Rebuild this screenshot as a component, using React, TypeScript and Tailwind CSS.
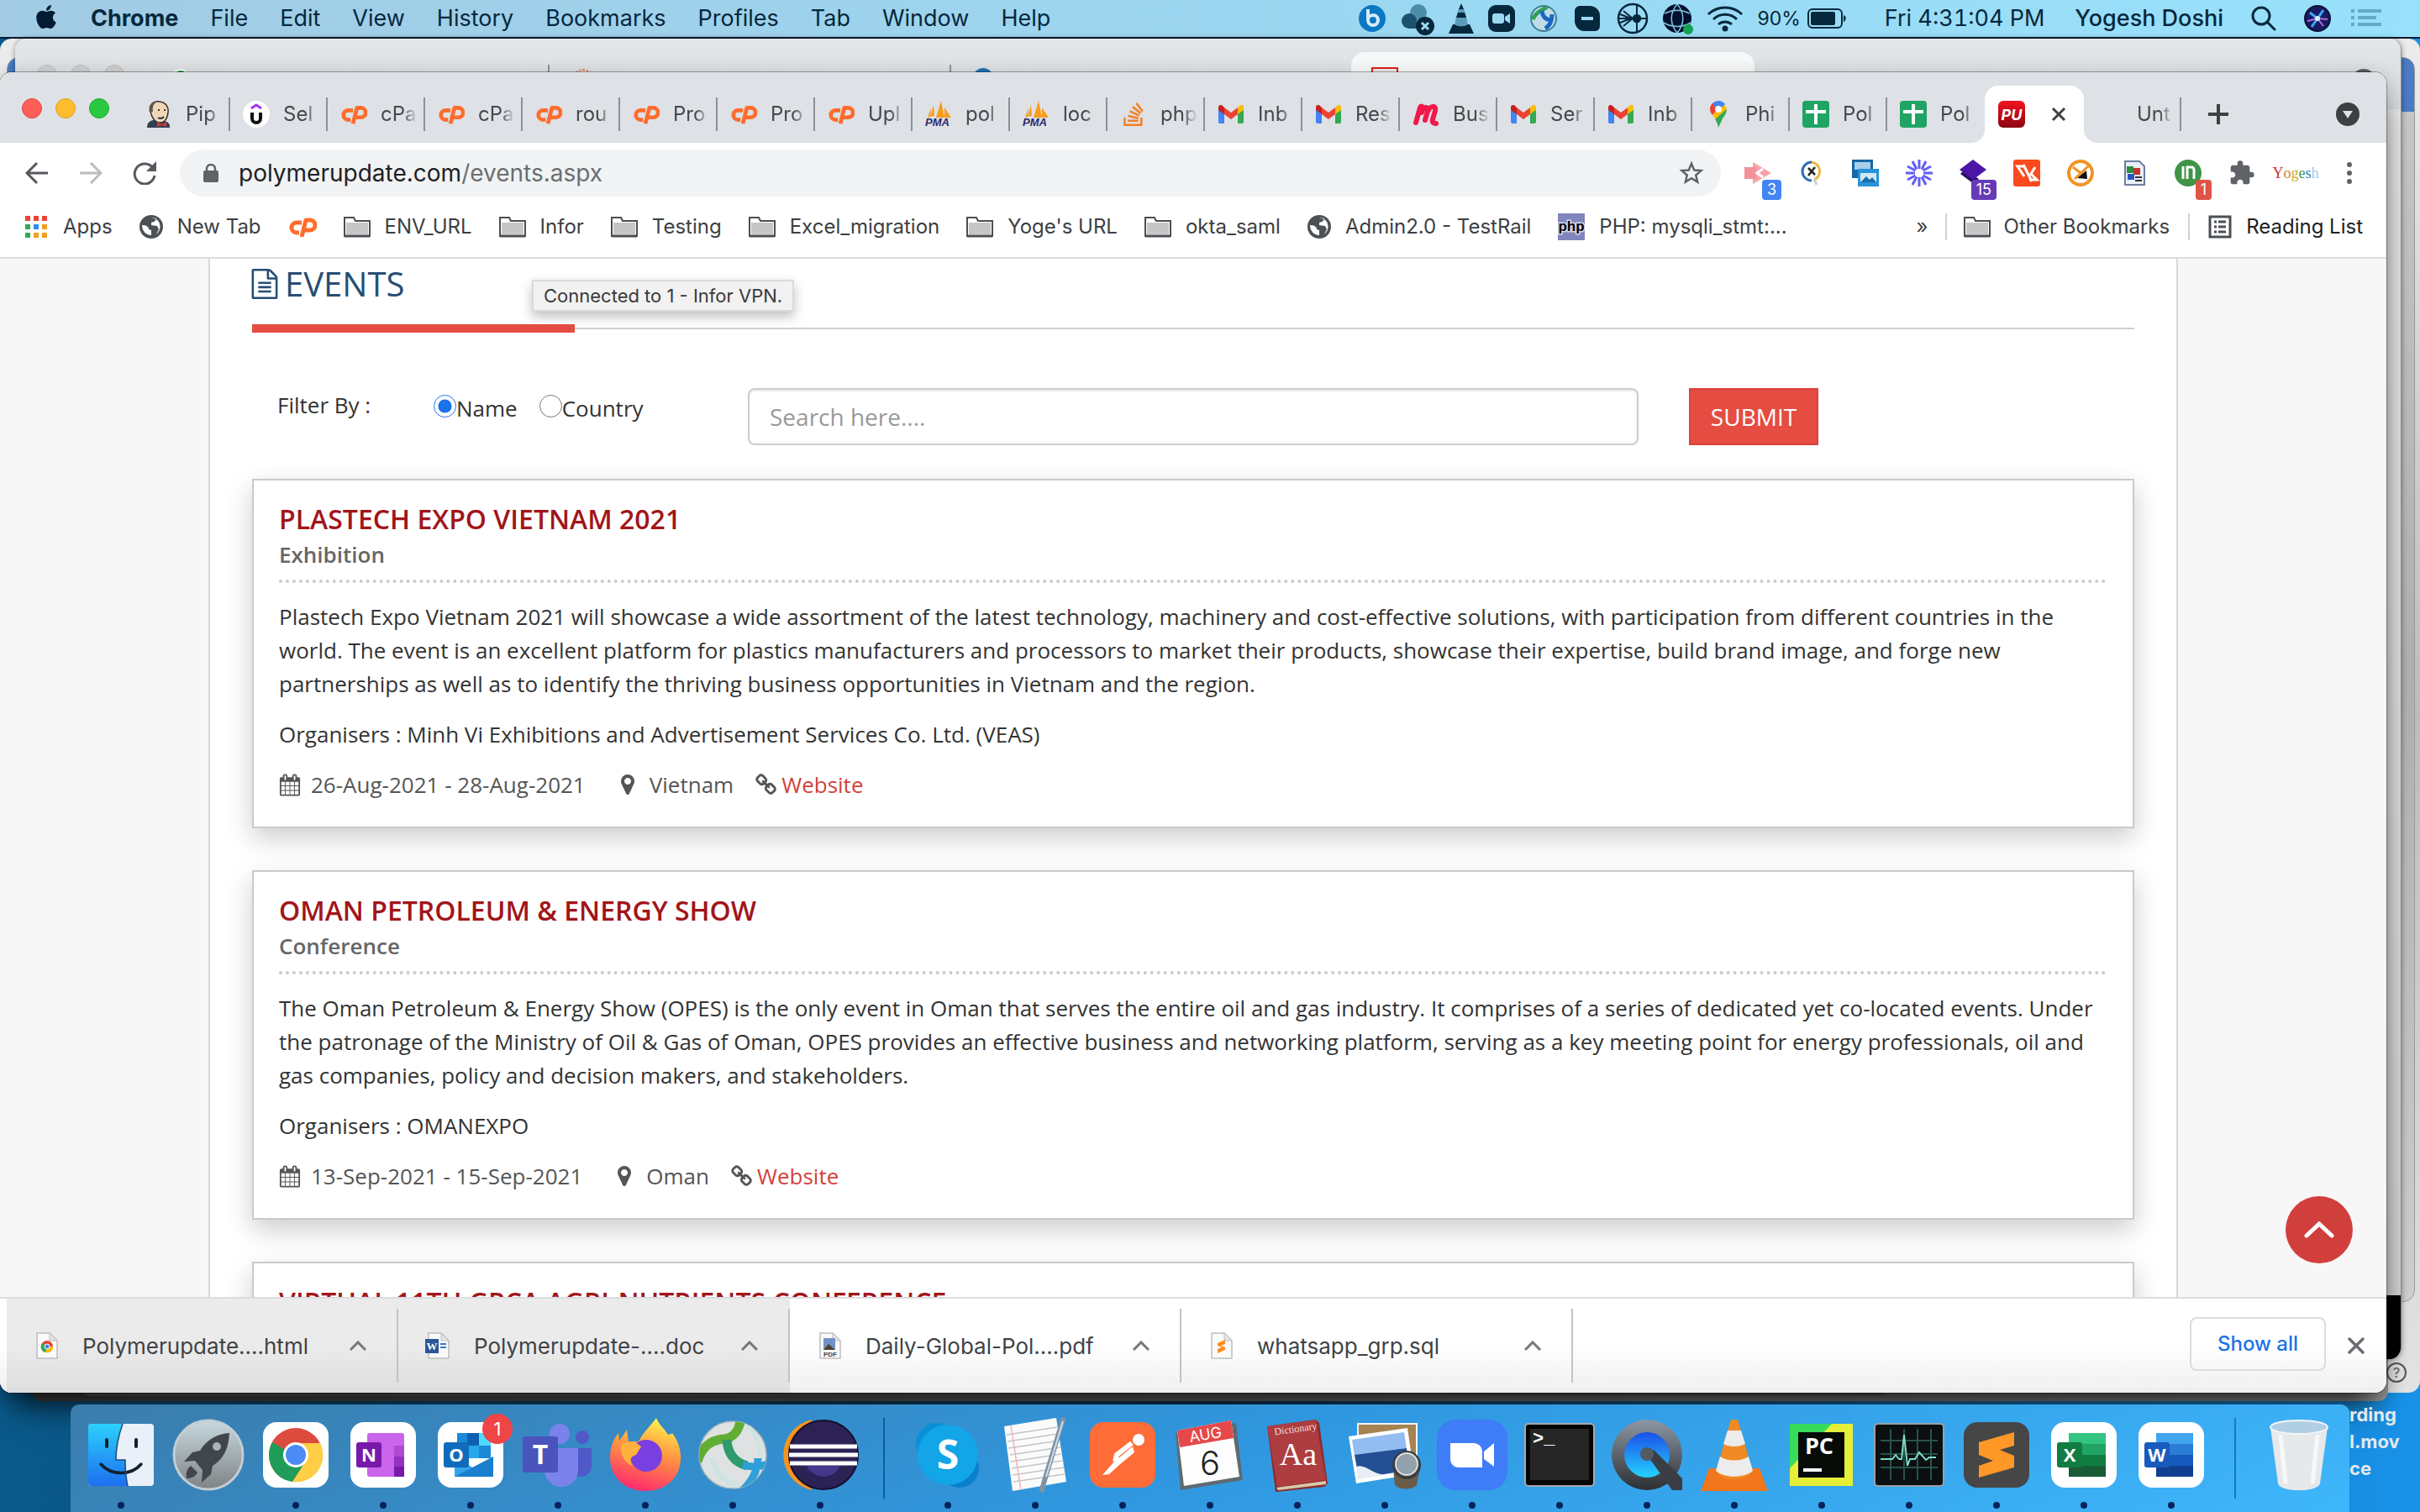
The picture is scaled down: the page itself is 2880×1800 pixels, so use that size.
import type { ReactNode } from "react";
import { FaApple } from "react-icons/fa";
import { MdExtension } from "react-icons/md";
import { SiStackoverflow } from "react-icons/si";

const ui = "font-['Inter',sans-serif]";

/* ---------- menu bar ---------- */

const menus = ["File", "Edit", "View", "History", "Bookmarks", "Profiles", "Tab", "Window", "Help"];

function StatusIcons() {
  return (
    <div className="flex items-center gap-4 text-[#06283d]">
      <svg className="h-9 w-9" viewBox="0 0 36 36">
        <circle cx="18" cy="18" r="16" fill="#0a78c2" />
        <path d="M13 7v13a6 6 0 1 0 6-6c-2 0-4 1-6 3" fill="none" stroke="#d4ecfa" strokeWidth="4" />
      </svg>
      <svg className="h-10 w-10" viewBox="0 0 40 40">
        <circle cx="21" cy="13" r="10" fill="#4c8daa" />
        <circle cx="10" cy="23" r="9" fill="#1d526c" />
        <path d="M10 32h16V18z" fill="#1d526c" />
        <circle cx="29" cy="29" r="11" fill="#06283d" />
        <path d="M25 25l8 8M33 25l-8 8" stroke="#9cd9f2" strokeWidth="3" />
      </svg>
      <svg className="h-9 w-8" viewBox="0 0 32 36">
        <path d="M13 6h6l4 14H9z" fill="#5c9cb9" />
        <path d="M16 0l-3 7h6zM12 11h8l2 6H10z" fill="#06283d" />
        <path d="M6 25h3c4 3 10 3 14 0h3l5 11H1z" fill="#06283d" />
        <path d="M10 18h12l2 7c-4 3-12 3-16 0z" fill="#5c9cb9" />
      </svg>
      <svg className="h-8 w-8" viewBox="0 0 32 32">
        <rect width="32" height="32" rx="9" fill="#06283d" />
        <rect x="5" y="10" width="14" height="12" rx="3" fill="#9cd9f2" />
        <path d="M20 14l6-4v12l-6-4z" fill="#9cd9f2" />
      </svg>
      <svg className="h-9 w-9" viewBox="0 0 36 36">
        <circle cx="18" cy="18" r="15" fill="#bfdce6" stroke="#3d7f92" strokeWidth="2" />
        <path d="M5 19C9 9 18 8 22 4" fill="none" stroke="#2fa05a" strokeWidth="5" />
        <path d="M16 9c1 8 6 11 12 11M28 13c0 9-3 14-8 17" fill="none" stroke="#1769c4" strokeWidth="5" />
      </svg>
      <svg className="h-9 w-9" viewBox="0 0 36 36">
        <path d="M9 3h12a12 12 0 0 1 12 13v11a6 6 0 0 1-7 6H14A12 12 0 0 1 3 21V9a6 6 0 0 1 6-6z" fill="#06283d" />
        <path d="M11 18h14" stroke="#9cd9f2" strokeWidth="4" />
      </svg>
      <svg className="h-10 w-10" viewBox="0 0 40 40" fill="none" stroke="#06283d" strokeWidth="2.5">
        <circle cx="20" cy="20" r="17" />
        <circle cx="25" cy="20" r="4" fill="#06283d" />
        <path d="M25 3v12M25 25v12M29 20h8M20 20H4M20 20L9 11M20 20L9 29M18 20L5 15M18 20L5 25" strokeWidth="2" />
      </svg>
      <svg className="h-10 w-9" viewBox="0 0 36 40" fill="none" stroke="#7fc3de" strokeWidth="1.5">
        <circle cx="17" cy="20" r="17" fill="#020f2c" stroke="none" />
        <path d="M17 3c-9 10-9 24 0 34M17 3c9 10 9 24 0 34M2 14c10-5 20-5 30 0M1 25c10 6 22 6 32 0" />
        <circle cx="30" cy="33" r="6" fill="#12a150" stroke="none" />
      </svg>
      <svg className="h-8 w-11" viewBox="0 0 44 32" fill="none" stroke="#06283d" strokeWidth="3">
        <path d="M2 11a29 29 0 0 1 40 0M8 17a20 20 0 0 1 28 0M14 23a12 12 0 0 1 16 0" />
        <circle cx="22" cy="28" r="2" fill="#06283d" />
      </svg>
      <div className="flex items-center gap-2">
        <span className="text-[23px]">90%</span>
        <svg className="h-6 w-12" viewBox="0 0 48 24">
          <rect x="1" y="1" width="40" height="22" rx="5" fill="none" stroke="#06283d" strokeWidth="2" />
          <rect x="4" y="4" width="29" height="16" rx="2" fill="#06283d" />
          <path d="M43 8v8c3-1 4-7 0-8z" fill="#06283d" />
        </svg>
      </div>
    </div>
  );
}

function MenuBar() {
  return (
    <header className={`relative flex h-[46px] items-center justify-between border-b-2 border-[#02182b] bg-linear-to-r from-[#a2cbe4] via-[#9cd6f0] to-[#98e1fb] pl-10 pr-[46px] text-[27px] text-[#06283d] ${ui}`}>
      <nav className="flex items-center gap-[38px]">
        <FaApple className="mb-1 h-8 w-[30px] text-[#031b33]" />
        <span className="font-bold">Chrome</span>
        {menus.map((m) => (
          <span key={m}>{m}</span>
        ))}
      </nav>
      <div className="flex items-center">
        <StatusIcons />
        <span className="ml-11 tabular-nums">Fri 4:31:04 PM</span>
        <span className="ml-9 font-medium">Yogesh Doshi</span>
        <svg className="ml-8 h-8 w-8" viewBox="0 0 32 32" fill="none" stroke="#06283d" strokeWidth="3">
          <circle cx="13" cy="13" r="10" />
          <path d="M20 20l9 9" strokeLinecap="round" />
        </svg>
        <svg className="ml-8 h-8 w-8" viewBox="0 0 32 32">
          <circle cx="16" cy="16" r="15" fill="#1a1a63" stroke="#0b1030" strokeWidth="2" />
          <path d="M7 9l9 7 7-10M16 16l-7 10" stroke="#3aa8f0" strokeWidth="3" fill="none" />
          <path d="M16 16l7 9M4 19l12-3 12 1" stroke="#b06be0" strokeWidth="2" fill="none" />
          <circle cx="16" cy="16" r="3" fill="#d8f4ff" />
        </svg>
        <svg className="ml-6 h-[22px] w-9" viewBox="0 0 36 22" fill="#66a9c4">
          <path d="M0 0h4v4H0zM8 0h28v4H8zM0 8h4v4H0zM8 8h22v4H8zM0 16h4v4H0zM8 16h28v4H8z" />
        </svg>
      </div>
    </header>
  );
}

/* ---------- favicons ---------- */

const Gmail = () => (
  <svg className="h-[22px] w-[30px]" viewBox="0 0 30 22">
    <path d="M0 3v17a2 2 0 0 0 2 2h5V8z" fill="#4285f4" />
    <path d="M30 3v17a2 2 0 0 1-2 2h-5V8z" fill="#34a853" />
    <path d="M23 3v8l7-5V3c0-3-3-4-5-2z" fill="#fbbc04" />
    <path d="M7 11V3l8 6 8-6v8l-8 6z" fill="#ea4335" />
    <path d="M0 3v3l7 5V3L5 1C3-1 0 0 0 3z" fill="#c5221f" />
  </svg>
);

const Cpanel = () => (
  <svg className="h-6 w-[34px]" viewBox="0 0 34 24" fill="none" stroke="#ff6c2c" strokeWidth="5" strokeLinejoin="round">
    <path d="M16 7h-6a6 6 0 0 0 0 12h3" />
    <path d="M16 24l5-20h5a6 6 0 0 1 0 12h-6" />
  </svg>
);

const Pma = () => (
  <svg className="h-8 w-8 overflow-visible" viewBox="0 0 32 32">
    <path d="M10 5L6 19l5-1zM13 20L19 0l4 20zM23 20l0-12 8 12zM3 20l4-12-1 11z" fill="#f89c1c" />
    <text x="0" y="30" fontSize="13" fontWeight="bold" fontStyle="italic" fontFamily="Liberation Sans" fill="#2d2a6b">PMA</text>
  </svg>
);

const Sheet = () => (
  <svg className="h-8 w-8" viewBox="0 0 32 32">
    <rect width="32" height="32" rx="4" fill="#1fa463" />
    <path d="M16 4v24M4 13h24" stroke="#fff" strokeWidth="4" />
  </svg>
);

const Jenkins = () => (
  <svg className="h-8 w-8" viewBox="0 0 32 32">
    <path d="M2 32c0-6 3-8 7-9l10 0c7 1 11 4 10 9z" fill="#33414f" />
    <path d="M6 12C5 3 11 0 17 1c7 1 11 6 10 13-1 8-5 12-10 12S7 20 6 12z" fill="#f0d6b7" stroke="#333" strokeWidth="1.5" />
    <path d="M5 14C3 5 8 0 14 1c-4 2-6 6-5 12z" fill="#5b5650" />
    <path d="M15 11h2M22 11h2M15 20c3 2 5 1 7-1" stroke="#333" strokeWidth="2" fill="none" />
    <path d="M14 25l6 3 5-3v6l-5-2-6 2z" fill="#d33833" />
  </svg>
);

const Udemy = () => (
  <svg className="h-8 w-8" viewBox="0 0 32 32">
    <circle cx="16" cy="16" r="16" fill="#fff" />
    <path d="M10 9l6-4 6 4" fill="none" stroke="#a435f0" strokeWidth="3" />
    <path d="M11 14v7a5 5 0 0 0 10 0v-7" fill="none" stroke="#111" strokeWidth="4" />
  </svg>
);

const Pin = () => (
  <svg className="h-8 w-8" viewBox="0 0 32 32">
    <path d="M6 10a10 10 0 0 0 3 7l9-9-8-6a10 10 0 0 0-4 8z" fill="#ea4335" />
    <path d="M9 17l13-13c3 2 4 5 4 8L13 22z" fill="#fbbc04" />
    <path d="M26 10c0 4-2 7-5 11l-5 11c-1-5-2-7-4-10z" fill="#34a853" />
    <path d="M9 3a10 10 0 0 1 15 1l-8 8z" fill="#4285f4" />
    <circle cx="16" cy="10" r="4" fill="#fff" />
  </svg>
);

const Stack = () => <SiStackoverflow className="h-7 w-7 text-[#f48024]" />;

const Meetup = () => (
  <svg className="h-8 w-8" viewBox="0 0 32 32" fill="none" stroke="#f1184c" strokeWidth="6" strokeLinecap="round" strokeLinejoin="round">
    <path d="M4 26L9 8c1-2 3-2 3 1l-1 5M11 13c2-6 8-7 7-1l-3 11M18 13c3-8 11-8 9-1l-3 10c-1 4 1 5 4 5" />
  </svg>
);

const tabs: { icon: ReactNode; label: string }[] = [
  { icon: <Jenkins />, label: "Pip" },
  { icon: <Udemy />, label: "Sel" },
  { icon: <Cpanel />, label: "cPa" },
  { icon: <Cpanel />, label: "cPa" },
  { icon: <Cpanel />, label: "rou" },
  { icon: <Cpanel />, label: "Pro" },
  { icon: <Cpanel />, label: "Pro" },
  { icon: <Cpanel />, label: "Upl" },
  { icon: <Pma />, label: "pol" },
  { icon: <Pma />, label: "loc" },
  { icon: <Stack />, label: "php" },
  { icon: <Gmail />, label: "Inb" },
  { icon: <Gmail />, label: "Res" },
  { icon: <Meetup />, label: "Bus" },
  { icon: <Gmail />, label: "Ser" },
  { icon: <Gmail />, label: "Inb" },
  { icon: <Pin />, label: "Phi" },
  { icon: <Sheet />, label: "Pol" },
  { icon: <Sheet />, label: "Pol" },
];

function TabStrip() {
  return (
    <div className="flex h-[84px] items-end bg-[#dee1e6] pl-[26px] pr-8 text-[24px] text-[#45484c]">
      <div className="flex h-[68px] items-start gap-4 pr-7 pt-[15px]">
        <button aria-label="Close window" className="h-6 w-6 rounded-full border border-[#e0443e] bg-[#ff5f57]" />
        <button aria-label="Minimise window" className="h-6 w-6 rounded-full border border-[#dea123] bg-[#febc2e]" />
        <button aria-label="Zoom window" className="h-6 w-6 rounded-full border border-[#1aab29] bg-[#28c840]" />
      </div>
      <div className="flex h-[68px] items-center">
        {tabs.map((t, i) => (
          <button
            key={i}
            className={`flex h-10 w-[116px] items-center pl-[15px] ${i < tabs.length - 1 ? "border-r-2 border-[#8d9095]" : ""}`}
          >
            <span className="flex w-8 shrink-0 justify-center">{t.icon}</span>
            <span className="ml-4 w-11 whitespace-nowrap text-left mask-r-from-60%">{t.label}</span>
          </button>
        ))}
      </div>
      <div className="relative flex h-[68px] w-[118px] items-center justify-between rounded-t-2xl bg-white pl-4 pr-5">
        <span className="flex h-8 w-8 items-center justify-center rounded-md bg-linear-to-b from-[#f5121d] to-[#8b0710] text-[18px] font-bold italic text-white">PU</span>
        <button aria-label="Close tab">
          <svg className="h-5 w-5" viewBox="0 0 20 20" stroke="#3c4043" strokeWidth="3">
            <path d="M3 3l14 14M17 3L3 17" />
          </svg>
        </button>
        <svg className="absolute -left-4 bottom-0 h-4 w-4" viewBox="0 0 16 16" fill="#fff">
          <path d="M16 0v16H0A16 16 0 0 0 16 0z" />
        </svg>
        <svg className="absolute -right-4 bottom-0 h-4 w-4" viewBox="0 0 16 16" fill="#fff">
          <path d="M0 0v16h16A16 16 0 0 1 0 0z" />
        </svg>
      </div>
      <div className="flex h-[68px] flex-1 items-center">
        <button className="flex h-10 w-[116px] items-center border-r-2 border-[#8d9095] pl-[63px]">
          <span className="w-11 whitespace-nowrap text-left mask-r-from-60%">Unt</span>
        </button>
        <button aria-label="New tab" className="ml-8">
          <svg className="h-6 w-6" viewBox="0 0 24 24" stroke="#3c4043" strokeWidth="4">
            <path d="M12 0v24M0 12h24" />
          </svg>
        </button>
        <button aria-label="Search tabs" className="ml-auto">
          <svg className="h-7 w-7" viewBox="0 0 28 28">
            <circle cx="14" cy="14" r="14" fill="#3c4043" />
            <path d="M8 10h12l-6 9z" fill="#dee1e6" />
          </svg>
        </button>
      </div>
    </div>
  );
}

/* ---------- toolbar ---------- */

function Badge({ color, children }: { color: string; children: ReactNode }) {
  return (
    <span className={`absolute -bottom-4 -right-3 rounded-[4px] px-[6px] text-[18px] leading-6 text-white ${color}`}>{children}</span>
  );
}

function Extensions() {
  return (
    <div className="flex items-center gap-8">
      <span className="relative">
        <svg className="h-8 w-8" viewBox="0 0 32 32">
          <path d="M10 3l22 13-22 13z" fill="#f7a3a8" />
          <rect y="9" width="14" height="14" fill="#f39298" />
          <path d="M22 11l-7 5 7 5" fill="none" stroke="#fff" strokeWidth="3" />
        </svg>
        <Badge color="bg-[#4285f4]">3</Badge>
      </span>
      <svg className="h-8 w-8" viewBox="0 0 32 32" fill="none">
        <path d="M16 3a11 11 0 0 0 0 22" stroke="#2f6fb5" strokeWidth="3" />
        <path d="M16 3a11 11 0 0 1 3 21" stroke="#efb63d" strokeWidth="3" />
        <path d="M19 23l3 7" stroke="#c9ccd0" strokeWidth="3" />
        <path d="M12 10l8 8M20 9l-8 10" stroke="#222" strokeWidth="2.5" />
      </svg>
      <svg className="h-8 w-8" viewBox="0 0 32 32">
        <rect width="25" height="22" fill="#1767a6" />
        <rect x="3" y="3" width="19" height="9" fill="#a9d0ea" />
        <rect x="7" y="11" width="25" height="21" fill="#2793d8" />
        <rect x="10" y="16" width="19" height="11" fill="#d3eaf7" />
        <path d="M10 27l7-7 4 4 3-3 5 6z" fill="#1b6ca8" />
      </svg>
      <svg className="h-8 w-8" viewBox="0 0 32 32" stroke="#625df5" strokeWidth="3">
        <path d="M16 0v11M16 21v11M0 16h11M21 16h11M8 2l5 9.500M19 20.500l5 9.500M2 8l9.500 5M20.500 19l9.500 5M24 2l-5 9.500M13 20.500L8 30M30 8l-9.500 5M11.500 19L2 24" />
      </svg>
      <span className="relative">
        <svg className="h-8 w-8" viewBox="0 0 32 32">
          <path d="M1 17l16 12 6-6L6 12z" fill="#2c0f66" />
          <path d="M16 0l16 12-16 12L0 12z" fill="#4b16a8" />
        </svg>
        <Badge color="bg-[#673ab7]">15</Badge>
      </span>
      <svg className="h-8 w-8" viewBox="0 0 32 32" fill="none" stroke="#fff" strokeWidth="3">
        <rect width="32" height="32" rx="3" fill="#fc4a1f" stroke="none" />
        <path d="M13 8H5l8 12M12 6l10 20M26 9l-5 8 7 7h-9" />
      </svg>
      <svg className="h-8 w-8" viewBox="0 0 32 32" fill="none">
        <circle cx="16" cy="16" r="14" fill="#fff" stroke="#f29423" strokeWidth="4" />
        <path d="M7 9l12 9M9 23L26 7" stroke="#f29423" strokeWidth="3" />
        <path d="M23 13l1 10-12-1z" fill="#111" />
      </svg>
      <svg className="h-8 w-8" viewBox="0 0 32 32">
        <path d="M5 2h17l6 6v22H5z" fill="#e9f0f8" stroke="#6d7f9f" strokeWidth="2" />
        <rect x="7" y="8" width="8" height="8" fill="#2a8f3c" />
        <rect x="15" y="10" width="8" height="8" fill="#c43131" />
        <rect x="8" y="17" width="8" height="7" fill="#2b56c0" />
        <path d="M17 21h8M17 25h8" stroke="#333" strokeWidth="2" />
      </svg>
      <span className="relative">
        <svg className="h-8 w-8" viewBox="0 0 32 32">
          <circle cx="16" cy="16" r="16" fill="#3f9447" />
          <path d="M10 8v15M15 23V9h5a3 3 0 0 1 3 3v11" fill="none" stroke="#fff" strokeWidth="3" />
        </svg>
        <Badge color="bg-[#e05347]">1</Badge>
      </span>
      <MdExtension className="h-8 w-8 text-[#5f6368]" />
      <span className="flex w-8 justify-center font-['Liberation_Serif',serif] text-[18px] leading-8">
        <span className="text-[#c93434]">Y</span>
        <span className="text-[#d4852e]">o</span>
        <span className="text-[#c9a92e]">g</span>
        <span className="text-[#3f9447]">e</span>
        <span className="text-[#2f7fb5]">s</span>
        <span className="text-[#9cc9e6]">h</span>
      </span>
      <button aria-label="Chrome menu" className="flex w-8 justify-center">
        <svg className="h-7 w-6" viewBox="0 0 24 28" fill="#5f6368">
          <circle cx="12" cy="4" r="3" />
          <circle cx="12" cy="14" r="3" />
          <circle cx="12" cy="24" r="3" />
        </svg>
      </button>
    </div>
  );
}

function Toolbar() {
  return (
    <div className="flex h-[72px] items-center bg-white pl-[30px] pr-7">
      <div className="flex items-center gap-9 pr-7">
        <button aria-label="Back">
          <svg className="h-7 w-7" viewBox="0 0 28 28" fill="none" stroke="#55595e" strokeWidth="3">
            <path d="M27 14H3M14 2L2 14l12 12" />
          </svg>
        </button>
        <button aria-label="Forward">
          <svg className="h-7 w-7" viewBox="0 0 28 28" fill="none" stroke="#babcbe" strokeWidth="3">
            <path d="M1 14h24M14 2l12 12-12 12" />
          </svg>
        </button>
        <button aria-label="Reload">
          <svg className="h-7 w-7" viewBox="0 0 28 28" fill="none" stroke="#55595e" strokeWidth="3">
            <path d="M24 8A12 12 0 1 0 26 17" />
            <path d="M28 0v12H16z" fill="#55595e" stroke="none" />
          </svg>
        </button>
      </div>
      <div className="mr-7 flex h-14 flex-1 items-center rounded-full bg-[#f1f3f4] pl-7 pr-5 text-[28px]">
        <svg className="mr-6 h-[22px] w-[18px]" viewBox="0 0 18 22">
          <rect y="8" width="18" height="14" rx="2" fill="#5f6368" />
          <path d="M4 9V6a5 5 0 0 1 10 0v3" fill="none" stroke="#5f6368" strokeWidth="2.5" />
        </svg>
        <span className="text-[#202124]">polymerupdate.com</span>
        <span className="text-[#6a6e73]">/events.aspx</span>
        <button aria-label="Bookmark this page" className="ml-auto">
          <svg className="h-[30px] w-[30px]" viewBox="0 0 24 24" fill="none" stroke="#5f6368" strokeWidth="2">
            <path d="M12 3l2.600 6.200 6.600.500-5 4.300 1.500 6.500L12 17l-5.700 3.500L7.800 14l-5-4.300 6.600-.500z" />
          </svg>
        </button>
      </div>
      <Extensions />
    </div>
  );
}

/* ---------- bookmarks ---------- */

const Folder = () => (
  <svg className="h-[26px] w-8" viewBox="0 0 32 26">
    <path d="M1 4V2h11l2 4h17v18H1z" fill="#fff" stroke="#4b4e52" strokeWidth="2" />
    <rect x="3" y="8" width="26" height="14" fill="#c6c6c6" />
    <path d="M1 24h30" stroke="#4b4e52" strokeWidth="3" />
  </svg>
);

const Globe = () => (
  <svg className="h-7 w-7" viewBox="0 0 28 28">
    <circle cx="14" cy="14" r="14" fill="#4d5156" />
    <path d="M3 12c5 0 8 2 8 5l3 1v6c-6 0-11-5-11-12zM14 3l6 1c-1 4-3 4-6 5v3l7 1 2 4-3 6c6-5 6-14 0-18z" fill="#fff" />
  </svg>
);

const Apps = () => (
  <svg className="h-[26px] w-7" viewBox="0 0 28 26">
    <path d="M0 0h6v6H0zM10 0h6v6h-6zM20 0h6v6h-6z" fill="#ea4335" />
    <path d="M0 10h6v6H0zM0 20h6v6H0z" fill="#34a853" />
    <path d="M10 10h6v6h-6z" fill="#2d8cf0" />
    <path d="M20 10h6v6h-6zM10 20h6v6h-6zM20 20h6v6h-6z" fill="#f0a020" />
  </svg>
);

const Php = () => (
  <svg className="h-8 w-8" viewBox="0 0 32 32">
    <rect width="32" height="32" fill="#8085bd" />
    <text x="16" y="21" fontSize="17" fontWeight="bold" textAnchor="middle" fontFamily="Liberation Sans" fill="#000" stroke="#d6d8ea" strokeWidth="3" paintOrder="stroke">php</text>
  </svg>
);

const bookmarks: { icon: ReactNode; label?: string }[] = [
  { icon: <Apps />, label: "Apps" },
  { icon: <Globe />, label: "New Tab" },
  { icon: <Cpanel /> },
  { icon: <Folder />, label: "ENV_URL" },
  { icon: <Folder />, label: "Infor" },
  { icon: <Folder />, label: "Testing" },
  { icon: <Folder />, label: "Excel_migration" },
  { icon: <Folder />, label: "Yoge's URL" },
  { icon: <Folder />, label: "okta_saml" },
  { icon: <Globe />, label: "Admin2.0 - TestRail" },
  { icon: <Php />, label: "PHP: mysqli_stmt:..." },
];

function Bookmarks() {
  return (
    <div className="flex h-[66px] items-center justify-between border-b-2 border-[#dadce0] bg-white pb-2 pl-[30px] pr-7 text-[24px] text-[#3c4043]">
      <div className="flex items-center gap-8">
        {bookmarks.map((b, i) => (
          <a key={i} href="#" aria-label={b.label ?? "cPanel"} className="flex items-center gap-[17px] whitespace-nowrap">
            {b.icon}
            {b.label && <span>{b.label}</span>}
          </a>
        ))}
      </div>
      <div className="flex items-center">
        <button aria-label="More bookmarks">»</button>
        <span className="mx-5 h-8 w-[2px] bg-[#d0d3d6]" />
        <a href="#" className="flex items-center gap-4">
          <Folder />
          Other Bookmarks
        </a>
        <span className="mx-[22px] h-8 w-[2px] bg-[#d0d3d6]" />
        <a href="#" className="flex items-center gap-[17px] text-[#202124]">
          <svg className="h-7 w-7" viewBox="0 0 28 28" fill="none" stroke="#4b4e52" strokeWidth="3">
            <rect x="2" y="2" width="24" height="24" />
            <path d="M7 8h3M12 8h9M7 14h3M12 14h9M7 20h3M12 20h9" />
          </svg>
          Reading List
        </a>
      </div>
    </div>
  );
}

/* ---------- page ---------- */

function Fa({ d, className }: { d: string; className: string }) {
  return (
    <svg className={className} viewBox="0 0 1792 1792" fill="currentColor">
      <path d={d} />
    </svg>
  );
}

const faCalendar =
  "M192 1664h288v-288h-288v288zm352 0h320v-288h-320v288zm-352-352h288v-320h-288v320zm352 0h320v-320h-320v320zm-352-384h288v-288h-288v288zm736 736h320v-288h-320v288zm-384-736h320v-288h-320v288zm768 736h288v-288h-288v288zm-384-352h320v-320h-320v320zm-352-864v-288q0-13-9.500-22.500t-22.500-9.500h-64q-13 0-22.500 9.500t-9.500 22.500v288q0 13 9.500 22.500t22.500 9.500h64q13 0 22.500-9.500t9.500-22.500zm736 864h288v-320h-288v320zm-384-384h320v-288h-320v288zm384 0h288v-288h-288v288zm32-480v-288q0-13-9.500-22.500t-22.500-9.500h-64q-13 0-22.500 9.500t-9.500 22.500v288q0 13 9.500 22.500t22.500 9.500h64q13 0 22.500-9.500t9.500-22.500zm384-64v1280q0 52-38 90t-90 38h-1408q-52 0-90-38t-38-90v-1280q0-52 38-90t90-38h128v-96q0-66 47-113t113-47h64q66 0 113 47t47 113v96h384v-96q0-66 47-113t113-47h64q66 0 113 47t47 113v96h128q52 0 90 38t38 90z";
const faMarker =
  "M1152 640q0-106-75-181t-181-75-181 75-75 181 75 181 181 75 181-75 75-181zm256 0q0 109-33 179l-364 774q-16 33-47.500 52t-67.500 19-67.500-19-46.500-52l-365-774q-33-70-33-179 0-212 150-362t362-150 362 150 150 362z";
const faLink =
  "M1456 1216q0-40-28-68l-208-208q-28-28-68-28-42 0-72 32 3 3 19 18.500t21.500 21.500 15 19 13 25.500 3.500 27.500q0 40-28 68t-68 28q-15 0-27.500-3.500t-25.500-13-19-15-21.500-21.500-18.500-19q-33 31-33 73 0 40 28 68l206 207q27 27 68 27 40 0 68-26l147-146q28-28 28-67zm-703-705q0-40-28-68l-206-207q-28-28-68-28-39 0-68 27l-147 146q-28 28-28 67 0 40 28 68l208 208q27 27 68 27 42 0 72-31-3-3-19-18.500t-21.500-21.500-15-19-13-25.500-3.500-27.500q0-40 28-68t68-28q15 0 27.500 3.500t25.500 13 19 15 21.500 21.500 18.500 19q33-31 33-73zm895 705q0 120-85 203l-147 146q-83 83-203 83-121 0-204-85l-206-207q-83-83-83-203 0-123 88-209l-88-88q-86 88-208 88-120 0-204-84l-208-208q-84-84-84-204t85-203l147-146q83-83 203-83 121 0 204 85l206 207q83 83 83 203 0 123-88 209l88 88q86-88 208-88 120 0 204 84l208 208q84 84 84 204z";
const faFile =
  "M1596 380q28 28 48 76t20 88v1152q0 40-28 68t-68 28h-1344q-40 0-68-28t-28-68v-1600q0-40 28-68t68-28h896q40 0 88 20t76 48zm-444-244v376h376q-10-29-22-41l-313-313q-12-12-41-22zm384 1528v-1024h-416q-40 0-68-28t-28-68v-416h-768v1536h1280zm-1024-864q0-14 9-23t23-9h704q14 0 23 9t9 23v64q0 14-9 23t-23 9h-704q-14 0-23-9t-9-23v-64zm736 224q14 0 23 9t9 23v64q0 14-9 23t-23 9h-704q-14 0-23-9t-9-23v-64q0-14 9-23t23-9h704zm0 256q14 0 23 9t9 23v64q0 14-9 23t-23 9h-704q-14 0-23-9t-9-23v-64q0-14 9-23t23-9h704z";

interface EventInfo {
  title: string;
  kind: string;
  text: string;
  organiser: string;
  dates: string;
  place: string;
}

const events: EventInfo[] = [
  {
    title: "PLASTECH EXPO VIETNAM 2021",
    kind: "Exhibition",
    text: "Plastech Expo Vietnam 2021 will showcase a wide assortment of the latest technology, machinery and cost-effective solutions, with participation from different countries in the world. The event is an excellent platform for plastics manufacturers and processors to market their products, showcase their expertise, build brand image, and forge new partnerships as well as to identify the thriving business opportunities in Vietnam and the region.",
    organiser: "Minh Vi Exhibitions and Advertisement Services Co. Ltd. (VEAS)",
    dates: "26-Aug-2021 - 28-Aug-2021",
    place: "Vietnam",
  },
  {
    title: "OMAN PETROLEUM & ENERGY SHOW",
    kind: "Conference",
    text: "The Oman Petroleum & Energy Show (OPES) is the only event in Oman that serves the entire oil and gas industry. It comprises of a series of dedicated yet co-located events. Under the patronage of the Ministry of Oil & Gas of Oman, OPES provides an effective business and networking platform, serving as a key meeting point for energy professionals, oil and gas companies, policy and decision makers, and stakeholders.",
    organiser: "OMANEXPO",
    dates: "13-Sep-2021 - 15-Sep-2021",
    place: "Oman",
  },
];

const cardBox = "border-2 border-[#cacaca] bg-white px-[30px] shadow-[0_12px_30px_rgba(0,0,0,0.2)]";

function EventCard({ e }: { e: EventInfo }) {
  return (
    <article className={`${cardBox} pb-[30px] pt-6`}>
      <h2 className="text-[32px] font-semibold leading-[44px] text-[#a1151a]">{e.title}</h2>
      <p className="text-[26px] font-semibold leading-[40px] text-[#666]">{e.kind}</p>
      <div className="mb-5 mt-[10px] border-b-4 border-dotted border-[#cbcbcb]" />
      <p className="leading-10">{e.text}</p>
      <p className="mt-5 leading-10">
        <span className="font-medium">Organisers :</span> {e.organiser}
      </p>
      <div className="mt-5 flex items-center leading-10 text-[#555]">
        <Fa d={faCalendar} className="mr-3 h-[27px] w-[26px]" />
        <span>{e.dates}</span>
        <Fa d={faMarker} className="ml-9 mr-3 h-7 w-7" />
        <span>{e.place}</span>
        <Fa d={faLink} className="ml-[26px] mr-1 h-[27px] w-[27px]" />
        <a href="#" className="text-[#d4403a]">Website</a>
      </div>
    </article>
  );
}

function EventsPage() {
  return (
    <main className="relative min-h-0 flex-1 overflow-hidden bg-[#f7f7f7] font-['Open_Sans',sans-serif] text-[26px] text-[#333]">
      <div className="mx-auto h-full w-full max-w-[2344px] border-x-2 border-[#d9d9d9] bg-white px-[50px]">
        <h1 className="flex h-[84px] items-start border-b-2 border-[#d0d0d0] text-[40px] leading-[60px] text-[#274d74]">
          <Fa d={faFile} className="-ml-[3px] mr-[6px] mt-3 h-9 w-9" />
          EVENTS
        </h1>
        <div className="-mt-[6px] h-[10px] w-[384px] bg-[#e54d42]" />
        <form className="flex items-start pt-[66px]" onSubmit={(ev) => ev.preventDefault()}>
          <span className="ml-[30px] w-[186px] leading-[40px]">Filter By :</span>
          <div className="flex w-[374px] gap-[26px] pt-1 leading-10">
            <label className="flex items-start">
              <input type="radio" name="by" defaultChecked className="mt-[4px] h-[27px] w-[27px] accent-[#1a73e8]" />
              Name
            </label>
            <label className="flex items-start">
              <input type="radio" name="by" className="mt-[4px] h-[27px] w-[27px]" />
              Country
            </label>
          </div>
          <input
            aria-label="Search events"
            placeholder="Search here...."
            className="h-[68px] w-[1060px] rounded-lg border-2 border-[#ccc] px-6 text-[28px] shadow-[inset_0_2px_2px_rgba(0,0,0,0.075)] placeholder:text-[#999]"
          />
          <button className="ml-[60px] h-[68px] w-[154px] border-2 border-[#d9433f] bg-[#e54d42] text-[28px] text-white">SUBMIT</button>
        </form>
        <div className="mt-10 flex flex-col gap-[50px]">
          {events.map((e) => (
            <EventCard key={e.title} e={e} />
          ))}
          <article className={`${cardBox} h-[416px] pt-6`}>
            <h2 className="text-[32px] font-semibold leading-[44px] text-[#a1151a]">VIRTUAL 11TH GPCA AGRI-NUTRIENTS CONFERENCE</h2>
          </article>
        </div>
      </div>
      <button
        aria-label="Back to top"
        className="absolute bottom-10 right-10 flex h-20 w-20 items-center justify-center rounded-full bg-[#d13f3c]"
      >
        <svg className="h-5 w-9" viewBox="0 0 36 20" fill="none" stroke="#fff" strokeWidth="5" strokeLinecap="round">
          <path d="M3 17L18 3l15 14" />
        </svg>
      </button>
    </main>
  );
}

/* ---------- downloads ---------- */

function FileIcon({ children }: { children: ReactNode }) {
  return (
    <svg className="h-8 w-8 shrink-0 overflow-visible" viewBox="0 0 32 32">
      <path d="M4 1h15l9 9v21H4z" fill="#fafafa" stroke="#bdbdbd" strokeWidth="1.500" />
      <path d="M19 1l9 9h-9z" fill="#e6e6e6" stroke="#bdbdbd" />
      {children}
    </svg>
  );
}

const downloads: { name: string; shaded: boolean; icon: ReactNode }[] = [
  {
    name: "Polymerupdate....html",
    shaded: true,
    icon: (
      <FileIcon>
        <circle cx="16" cy="17" r="7" fill="#ea4335" />
        <path d="M16 17l-6-4a7 7 0 0 0 4 11z" fill="#34a853" />
        <path d="M16 17h7a7 7 0 0 1-9 7z" fill="#fbbc04" />
        <circle cx="16" cy="17" r="3" fill="#4285f4" stroke="#fff" />
      </FileIcon>
    ),
  },
  {
    name: "Polymerupdate-....doc",
    shaded: true,
    icon: (
      <FileIcon>
        <rect x="0" y="8" width="16" height="17" fill="#2b579a" />
        <text x="8" y="21" fontSize="13" fontWeight="bold" textAnchor="middle" fontFamily="Liberation Serif" fill="#fff">W</text>
        <path d="M18 14h7M18 18h7" stroke="#2b7cd3" strokeWidth="2" />
      </FileIcon>
    ),
  },
  {
    name: "Daily-Global-Pol....pdf",
    shaded: false,
    icon: (
      <FileIcon>
        <rect x="8" y="7" width="14" height="14" fill="#6f93c8" />
        <path d="M8 21l6-7 8 7z" fill="#4d4335" />
        <text x="16" y="29" fontSize="8" fontWeight="bold" textAnchor="middle" fontFamily="Liberation Sans" fill="#444">PDF</text>
      </FileIcon>
    ),
  },
  {
    name: "whatsapp_grp.sql",
    shaded: false,
    icon: (
      <FileIcon>
        <path d="M20 9v5l-5 2 5 2v3l-9 4v-5l5-2-5-2v-3z" fill="#ff8a1f" />
      </FileIcon>
    ),
  },
];

function DownloadsBar() {
  return (
    <footer className="flex h-[114px] items-center border-t-2 border-[#dadce0] bg-linear-to-b from-white from-50% to-[#efefef] pl-2 pr-6">
      {downloads.map((d) => (
        <div
          key={d.name}
          className={`flex h-full w-[466px] items-center text-[26px] text-[#3f4347] ${d.shaded ? "bg-linear-to-b from-[#ebebeb] from-50% to-[#dedede]" : ""}`}
        >
          <div className="flex h-[88px] w-full items-center border-r-2 border-[#c3c3c3] pl-8 pr-9">
            {d.icon}
            <span className="ml-[26px] flex-1 whitespace-nowrap">{d.name}</span>
            <button aria-label={`Options for ${d.name}`}>
              <svg className="h-3 w-5" viewBox="0 0 20 12" fill="none" stroke="#74777b" strokeWidth="3">
                <path d="M1 11l9-9 9 9" />
              </svg>
            </button>
          </div>
        </div>
      ))}
      <button className="mb-1 ml-auto h-16 rounded-lg border-2 border-[#dadce0] px-[31px] text-[24px] font-medium text-[#1a73e8]">Show all</button>
      <button aria-label="Close downloads bar" className="ml-6">
        <svg className="h-6 w-6" viewBox="0 0 24 24" stroke="#6b6f73" strokeWidth="3.500" strokeLinecap="round">
          <path d="M4 4l16 16M20 4L4 20" />
        </svg>
      </button>
    </footer>
  );
}

/* ---------- dock ---------- */

function Art({ children }: { children: ReactNode }) {
  return (
    <svg className="h-[88px] w-[88px] overflow-visible" viewBox="0 0 88 88">
      {children}
    </svg>
  );
}

function Plate({ fill = "#fff" }: { fill?: string }) {
  return <rect x="5" y="5" width="78" height="78" rx="16" fill={fill} />;
}

function Letter({ x, y, size, fill = "#fff", children }: { x: number; y: number; size: number; fill?: string; children: string }) {
  return (
    <text x={x} y={y} fontSize={size} fontWeight="bold" textAnchor="middle" fontFamily="Open Sans" fill={fill}>
      {children}
    </text>
  );
}

function Office({ tones, box, letter }: { tones: string[]; box: string; letter: string }) {
  return (
    <Art>
      <Plate />
      <rect x="26" y="18" width="44" height="13" fill={tones[0]} />
      <rect x="26" y="31" width="44" height="13" fill={tones[1]} />
      <rect x="26" y="44" width="44" height="13" fill={tones[2]} />
      <rect x="26" y="57" width="44" height="13" fill={tones[3]} />
      <rect x="12" y="29" width="30" height="30" rx="3" fill={box} />
      <Letter x={27} y={52} size={22}>{letter}</Letter>
    </Art>
  );
}

const leftDock: { name: string; art: ReactNode; running: boolean }[] = [
  {
    name: "Finder",
    running: true,
    art: (
      <Art>
        <defs>
          <linearGradient id="finder" x1="0" y1="0" x2="0" y2="1">
            <stop offset="0" stopColor="#2bd0fc" />
            <stop offset="1" stopColor="#1d6ff0" />
          </linearGradient>
        </defs>
        <rect x="5" y="7" width="78" height="74" rx="4" fill="#e9f0f8" />
        <path d="M9 7h37c-5 14-8 28-8 43h11c0 12 1 22 3 31H9a4 4 0 0 1-4-4V11a4 4 0 0 1 4-4z" fill="url(#finder)" />
        <path d="M27 26v8M62 26v8" stroke="#12202e" strokeWidth="4" strokeLinecap="round" />
        <path d="M20 55c12 14 36 14 48 0" fill="none" stroke="#12202e" strokeWidth="3.500" strokeLinecap="round" />
        <path d="M46 7c-5 14-8 28-8 43h11c0 12 1 22 3 31" fill="none" stroke="#1d4e7d" strokeWidth="1.500" />
      </Art>
    ),
  },
  {
    name: "Launchpad",
    running: false,
    art: (
      <Art>
        <defs>
          <linearGradient id="launch" x1="0" y1="0" x2="0" y2="1">
            <stop offset="0" stopColor="#c7d8df" />
            <stop offset="1" stopColor="#7f8385" />
          </linearGradient>
        </defs>
        <circle cx="44" cy="44" r="41" fill="url(#launch)" stroke="#c3ced3" strokeWidth="3" />
        <path d="M69 18c-15 1-27 8-35 21l-9 2-10 11 13-1 9 11-1 15 11-10 2-10c13-8 19-20 20-39z" fill="#40464b" />
        <path d="M23 57c-5 4-6 9-5 15 6 0 10-2 13-7z" fill="#40464b" />
        <circle cx="54" cy="34" r="5" fill="#a9b4b8" />
      </Art>
    ),
  },
  {
    name: "Google Chrome",
    running: true,
    art: (
      <Art>
        <Plate />
        <circle cx="44" cy="44" r="32" fill="#dd4b3e" />
        <path d="M16 29a32 32 0 0 0 24 47l17-24z" fill="#1f9d58" />
        <path d="M44 30h29a32 32 0 0 1-33 46l18-28z" fill="#ffcd46" />
        <circle cx="44" cy="44" r="15" fill="#fff" />
        <circle cx="44" cy="44" r="12" fill="#4c8bf5" />
      </Art>
    ),
  },
  {
    name: "OneNote",
    running: true,
    art: (
      <Art>
        <Plate />
        <rect x="25" y="18" width="44" height="52" rx="3" fill="#ca64ea" />
        <rect x="57" y="33" width="12" height="13" fill="#ae4bd5" />
        <rect x="57" y="46" width="12" height="12" fill="#9332bf" />
        <rect x="57" y="58" width="12" height="12" fill="#7719aa" />
        <rect x="12" y="29" width="30" height="30" rx="3" fill="#7719aa" />
        <Letter x={27} y={52} size={22}>N</Letter>
      </Art>
    ),
  },
  {
    name: "Outlook",
    running: true,
    art: (
      <Art>
        <Plate />
        <rect x="28" y="18" width="40" height="30" fill="#1a8ad8" />
        <rect x="40" y="18" width="14" height="15" fill="#0f5fb0" />
        <rect x="54" y="18" width="14" height="15" fill="#50d9ff" />
        <rect x="40" y="33" width="14" height="15" fill="#28a8ea" />
        <path d="M25 46l23 14 23-14v24H25z" fill="#34a5ea" />
        <path d="M25 70l46-24v24z" fill="#1b7fd0" />
        <rect x="12" y="29" width="30" height="30" rx="3" fill="#0f6cbd" />
        <Letter x={27} y={52} size={22}>O</Letter>
        <circle cx="76" cy="13" r="18" fill="#f04545" />
        <text x="76" y="21" fontSize="22" textAnchor="middle" fontFamily="Inter" fill="#fff">1</text>
      </Art>
    ),
  },
  {
    name: "Teams",
    running: true,
    art: (
      <Art>
        <circle cx="46" cy="19" r="12" fill="#7b83eb" />
        <circle cx="73" cy="23" r="8" fill="#5059c9" />
        <path d="M62 36h22v22a13 13 0 0 1-18 11z" fill="#5059c9" />
        <path d="M28 36h40v24a20 20 0 0 1-40 4z" fill="#7b83eb" />
        <rect x="2" y="22" width="42" height="43" rx="3" fill="#4b53bc" />
        <Letter x={23} y={55} size={32}>T</Letter>
      </Art>
    ),
  },
  {
    name: "Firefox",
    running: true,
    art: (
      <Art>
        <defs>
          <linearGradient id="fox" x1="0.700" y1="0" x2="0.400" y2="1">
            <stop offset="0" stopColor="#fff44f" />
            <stop offset="0.450" stopColor="#ff9640" />
            <stop offset="1" stopColor="#ff2a6d" />
          </linearGradient>
        </defs>
        <path d="M57 0c3 8 10 13 14 20 2-1 3 0 5-2 9 12 12 26 9 39-4 18-20 30-41 30C20 87 2 70 2 47c0-12 4-22 10-29l1 9c3-4 6-8 9-13l2 14 12 0c6-12 14-18 21-28z" fill="url(#fox)" />
        <circle cx="45" cy="45" r="19" fill="#7a3fe0" />
        <path d="M14 34c6-8 16-8 25 0l-6 10c-8 2-8 8-4 13-10-3-13-12-15-23z" fill="#ffb13d" />
      </Art>
    ),
  },
  {
    name: "AnyConnect",
    running: true,
    art: (
      <Art>
        <defs>
          <clipPath id="disc">
            <circle cx="44" cy="44" r="40" />
          </clipPath>
        </defs>
        <circle cx="44" cy="44" r="40" fill="#dfe2e2" stroke="#9fb3bb" strokeWidth="1.500" />
        <g clipPath="url(#disc)" fill="none">
          <path d="M20 48c2 16 14 28 32 34" stroke="#cfe3e2" strokeWidth="7" />
          <path d="M50 2c18 8 26 24 26 44" stroke="#cfe3e2" strokeWidth="5" />
          <path d="M2 52c6-20 18-26 32-27 12-2 18-10 20-26" stroke="#62ad33" strokeWidth="11" />
          <path d="M37 26c1 17 10 27 24 31" stroke="#2d9b6c" strokeWidth="11" />
          <path d="M56 56c10 3 18 3 30-1M74 48c0 14-6 26-18 38" stroke="#2f9fd9" strokeWidth="9" />
        </g>
      </Art>
    ),
  },
  {
    name: "Eclipse",
    running: true,
    art: (
      <Art>
        <path d="M34 2a43 43 0 0 0 0 84" fill="#f7941e" />
        <circle cx="48" cy="44" r="41" fill="#2c2255" stroke="#151030" strokeWidth="2" />
        <path d="M28 57a22 22 0 0 0 40 0z" fill="#44378c" />
        <path d="M8 34h80M7 44h82M8 54h80" stroke="#fff" strokeWidth="5" />
      </Art>
    ),
  },
];

const rightDock: { name: string; art: ReactNode }[] = [
  {
    name: "Skype",
    art: (
      <Art>
        <circle cx="30" cy="30" r="24" fill="#0c8fd6" />
        <circle cx="58" cy="60" r="23" fill="#0a7fd0" />
        <circle cx="44" cy="44" r="36" fill="#12a5e8" />
        <Letter x={44} y={61} size={48}>S</Letter>
      </Art>
    ),
  },
  {
    name: "TextEdit",
    art: (
      <Art>
        <path d="M7 10L69 0l12 76-64 11z" fill="#fbfbfb" />
        <path d="M10 20l60-9M11 28l60-9M12 36l61-9M14 44l60-9M15 52l60-9M16 60l60-9M17 68l61-9M18 76l61-9" stroke="#c2c6ca" strokeWidth="1.500" />
        <path d="M15 9l12 77" stroke="#efb3b3" strokeWidth="1.500" />
        <path d="M77 2L54 78l-2 8" stroke="#7f93a6" strokeWidth="6" strokeLinecap="round" fill="none" />
        <path d="M77 4L57 70" stroke="#d5dee6" strokeWidth="2" />
      </Art>
    ),
  },
  {
    name: "Postman",
    art: (
      <Art>
        <Plate fill="#ff6c37" />
        <path d="M56 34L34 52 20 68l8-1 12-11 18-15z" fill="#fff" />
        <path d="M55 30L37 44l-2 8" fill="none" stroke="#fff" strokeWidth="6" />
        <circle cx="63" cy="26" r="7" fill="#fff" />
      </Art>
    ),
  },
  {
    name: "Calendar",
    art: (
      <Art>
        <path d="M3 18l6 68 74-12-8-68z" fill="#5f6a70" />
        <path d="M5 15L69 3l10 67-66 11z" fill="#fdfdfd" />
        <path d="M5 15L69 3l3 21-64 11z" fill="#e5484a" />
        <text x="39" y="26" fontSize="18" textAnchor="middle" fontFamily="Inter" fill="#fff" transform="rotate(-9 39 22)">AUG</text>
        <text x="44" y="68" fontSize="40" textAnchor="middle" fontFamily="Inter" fontWeight="300" fill="#222">6</text>
      </Art>
    ),
  },
  {
    name: "Dictionary",
    art: (
      <Art>
        <path d="M8 10l58-8 4 4 10 72-4 4-58 6z" fill="#8a2c2f" />
        <path d="M8 10l58-8 12 72-58 8z" fill="#ad3d40" />
        <path d="M19 83l59-8v4l-57 7z" fill="#d8c9a8" />
        <text x="42" y="17" fontSize="12" textAnchor="middle" fontFamily="Liberation Serif" fill="#f3dede" transform="rotate(-8 42 14)">Dictionary</text>
        <text x="45" y="56" fontSize="38" textAnchor="middle" fontFamily="Liberation Serif" fill="#fff">Aa</text>
      </Art>
    ),
  },
  {
    name: "Preview",
    art: (
      <Art>
        <rect x="12" y="7" width="70" height="56" fill="#a78352" stroke="#f4f4f4" strokeWidth="2" />
        <path d="M1 22l70-10 8 55-69 11z" fill="#fff" />
        <path d="M5 26l62-9 3 20-62 8z" fill="#93bdf0" />
        <path d="M8 44l62-8 4 26-61 10z" fill="#244f94" />
        <path d="M10 58c10-4 18 8 34 10l-31 5z" fill="#e8eef4" />
        <path d="M54 60l2 20c6 6 20 6 26 0l4-22z" fill="#6a5c48" />
        <circle cx="70" cy="56" r="17" fill="#3a3c40" />
        <circle cx="70" cy="55" r="13" fill="#93a1ad" stroke="#ddd" strokeWidth="2" />
      </Art>
    ),
  },
  {
    name: "Zoom",
    art: (
      <Art>
        <rect x="2" y="2" width="84" height="84" rx="22" fill="#3f7cf8" />
        <path d="M18 30h28a10 10 0 0 1 10 9v20H28a10 10 0 0 1-10-9z" fill="#fff" />
        <path d="M58 40l12-10v28L58 49z" fill="#fff" />
      </Art>
    ),
  },
  {
    name: "Terminal",
    art: (
      <Art>
        <rect x="3" y="7" width="82" height="74" rx="4" fill="#050505" stroke="#a5a9ac" strokeWidth="2" />
        <rect x="9" y="13" width="70" height="61" fill="#262626" />
        <text x="12" y="31" fontSize="22" fontWeight="bold" fontFamily="Liberation Mono" fill="#fff">&gt;_</text>
      </Art>
    ),
  },
  {
    name: "QuickTime Player",
    art: (
      <Art>
        <defs>
          <linearGradient id="ring" x1="0" y1="0" x2="0" y2="1">
            <stop offset="0" stopColor="#8d97a4" />
            <stop offset="1" stopColor="#2c2f33" />
          </linearGradient>
          <linearGradient id="lens" x1="0" y1="0" x2="0" y2="1">
            <stop offset="0" stopColor="#1c4fe8" />
            <stop offset="1" stopColor="#25d3ff" />
          </linearGradient>
        </defs>
        <circle cx="44" cy="44" r="42" fill="url(#ring)" />
        <circle cx="44" cy="44" r="27" fill="url(#lens)" />
        <path d="M44 44l30 42h12V72L52 38z" fill="#3a3e44" />
        <circle cx="44" cy="43" r="8" fill="#555a62" />
      </Art>
    ),
  },
  {
    name: "VLC",
    art: (
      <Art>
        <path d="M14 60h60l10 27H4z" fill="#f2761b" />
        <path d="M40 2h8l18 62c-8 12-36 12-44 0z" fill="#f08a24" />
        <path d="M36 15h16l5 16c-8 4-18 4-26 0zM27 46c10 6 24 6 34 0l5 17c-10 9-34 9-44 0z" fill="#ececec" />
      </Art>
    ),
  },
  {
    name: "PyCharm",
    art: (
      <Art>
        <rect x="6" y="7" width="75" height="74" fill="#e6ee38" />
        <path d="M6 7h50L6 60z" fill="#36dc5a" />
        <rect x="16" y="17" width="55" height="54" fill="#060b08" />
        <Letter x={41} y={43} size={27}>PC</Letter>
        <path d="M22 62h22" stroke="#fff" strokeWidth="4" />
      </Art>
    ),
  },
  {
    name: "Activity Monitor",
    art: (
      <Art>
        <rect x="3" y="7" width="82" height="74" rx="4" fill="#0b0f10" stroke="#9aa0a3" strokeWidth="2" />
        <path d="M10 27h68M10 43h68M10 59h68M22 13v61M38 13v61M54 13v61M70 13v61" stroke="#27534a" strokeWidth="2" />
        <path d="M10 49h14l4-5 4 5h3l3-29 4 37 3-8h6l5-8 8 9 4-3h8" fill="none" stroke="#7fd8c9" strokeWidth="2" />
      </Art>
    ),
  },
  {
    name: "Sublime Text",
    art: (
      <Art>
        <Plate fill="#464646" />
        <path d="M65 17v16L48 38l17 7v14L23 71V57l17-6-17-7V29z" fill="#ff9827" />
      </Art>
    ),
  },
  { name: "Excel", art: <Office tones={["#33c481", "#21a366", "#107c41", "#185c37"]} box="#107c41" letter="X" /> },
  { name: "Word", art: <Office tones={["#41a5ee", "#2b7cd3", "#185abd", "#103f91"]} box="#185abd" letter="W" /> },
];

function DockItem({ name, art, running = true }: { name: string; art: ReactNode; running?: boolean }) {
  return (
    <a href="#" aria-label={name} className="flex w-[104px] flex-col items-center gap-3 pt-4">
      {art}
      {running && <span className="h-2 w-2 rounded-full bg-[#04225c]" />}
    </a>
  );
}

function Dock() {
  return (
    <div className="absolute inset-x-0 bottom-0 flex justify-center">
      <nav className="flex h-32 rounded-t-[10px] bg-linear-160 from-[#3a7dac] via-[#2f97df] to-[#3fb6fb] px-2">
        {leftDock.map((d) => (
          <DockItem key={d.name} {...d} />
        ))}
        <span className="mx-[23px] mt-4 h-24 w-[2px] bg-[#0c5f9e]" />
        {rightDock.map((d) => (
          <DockItem key={d.name} {...d} />
        ))}
        <span className="mx-[23px] mt-4 h-24 w-[2px] bg-[#1878b8]" />
        <DockItem
          name="Trash"
          running={false}
          art={
            <Art>
              <path d="M10 11h68l-9 67c-2 11-48 11-50 0z" fill="#e6e8ea" />
              <path d="M22 20l6 58M66 20l-6 58" stroke="#f7f8f9" strokeWidth="5" />
              <ellipse cx="44" cy="11" rx="34" ry="8" fill="#b1cfe4" stroke="#f2f5f7" strokeWidth="2" />
            </Art>
          }
        />
      </nav>
    </div>
  );
}

/* ---------- desktop ---------- */

function BackWindows() {
  return (
    <div aria-hidden="true">
      <div className="absolute bottom-[142px] left-0 right-0 top-[46px] rounded-[14px] bg-linear-to-b from-[#ececec] via-[#bdbdbd] to-[#e4e4e4]" />
      <div className="absolute bottom-[250px] left-2 right-[6px] top-[68px] overflow-hidden rounded-[14px] border border-[#9a9a9a] bg-linear-to-b from-[#c9c9c9] via-[#b0b0b0] to-[#cfcfcf]">
        <div className="h-16 bg-[#4a7bc4]" />
      </div>
      <div className="absolute bottom-[132px] left-[38px] right-[38px] top-[1400px] rounded-[12px] bg-linear-to-r from-[#4b4b4b] to-[#a0a0a0]" />
      <div className="absolute bottom-[138px] left-[96px] right-[632px] top-[1400px] rounded-[10px] bg-[#757575]" />
      <div className="absolute bottom-[182px] left-[18px] right-[22px] top-[46px] flex flex-col overflow-hidden rounded-[14px] border-r border-[#909090] bg-linear-to-b from-[#e6e6e6] to-[#d0d0d0] shadow-[0_0_6px_rgba(0,0,0,0.4)]">
        <div className="relative h-[84px] bg-linear-to-b from-[#e3e7ea] to-[#d5d9dd]">
          <div className="absolute left-[26px] top-[31px] flex gap-4">
            <span className="h-6 w-6 rounded-full border border-[#bbb] bg-[#cfcfcf]" />
            <span className="h-6 w-6 rounded-full border border-[#bbb] bg-[#cfcfcf]" />
            <span className="h-6 w-6 rounded-full border border-[#bbb] bg-[#cfcfcf]" />
          </div>
          <span className="absolute left-[187px] top-[36px] h-5 w-5 rounded-full border-2 border-white bg-[#1aa34a]" />
          <span className="absolute left-[634px] top-[31px] h-10 w-[2px] bg-[#8d9095]" />
          <span className="absolute left-[664px] top-[36px] h-6 w-6 rounded-full border-2 border-dotted border-[#e8743b]" />
          <span className="absolute left-[1112px] top-[31px] h-10 w-[2px] bg-[#8d9095]" />
          <span className="absolute left-[1140px] top-[35px] h-6 w-6 rounded-full bg-[#1a73b5]" />
          <div className="absolute left-[1590px] top-4 h-[68px] w-[480px] rounded-t-2xl bg-[#f7f8f8]">
            <span className="absolute left-6 top-[18px] h-8 w-8 border-2 border-[#d22] bg-[#f3e9e9]" />
          </div>
          <span className="absolute right-[30px] top-[36px] h-7 w-7 rounded-full bg-[#5a5d60]" />
        </div>
        <div className="mt-auto h-[76px] bg-black" />
      </div>
      <span className="absolute bottom-[154px] right-4 flex h-6 w-6 items-center justify-center rounded-full border-2 border-[#555] font-['Inter',sans-serif] text-[16px] text-[#555]">?</span>
    </div>
  );
}

function DesktopFile() {
  return (
    <div className="absolute bottom-9 right-5 w-16 font-['Inter',sans-serif] text-[22px] font-bold leading-8 text-[#e3e8ec]">
      <p>rding</p>
      <p>l.mov</p>
      <p>ce</p>
    </div>
  );
}

export default function App() {
  return (
    <div className="relative h-screen w-full overflow-hidden bg-linear-to-r from-[#0a5a8c] via-[#0b3a5c] to-[#1893ea]">
      <MenuBar />
      <BackWindows />
      <section
        className={`absolute bottom-[142px] left-0 right-10 top-[86px] flex flex-col overflow-hidden rounded-[14px] bg-white shadow-[0_28px_36px_-14px_rgba(0,0,0,0.8),0_0_0_1px_rgba(0,0,0,0.3),0_4px_20px_rgba(0,0,0,0.2)] ${ui}`}
      >
        <TabStrip />
        <Toolbar />
        <Bookmarks />
        <EventsPage />
        <DownloadsBar />
      </section>
      <div
        role="tooltip"
        className={`absolute left-[633px] top-[333px] border-2 border-[#dadada] bg-[#f2f2f2] px-3 text-[22px] leading-[34px] text-[#3a3a3a] shadow-[0_6px_14px_rgba(0,0,0,0.25)] ${ui}`}
      >
        Connected to 1 - Infor VPN.
      </div>
      <DesktopFile />
      <Dock />
    </div>
  );
}
